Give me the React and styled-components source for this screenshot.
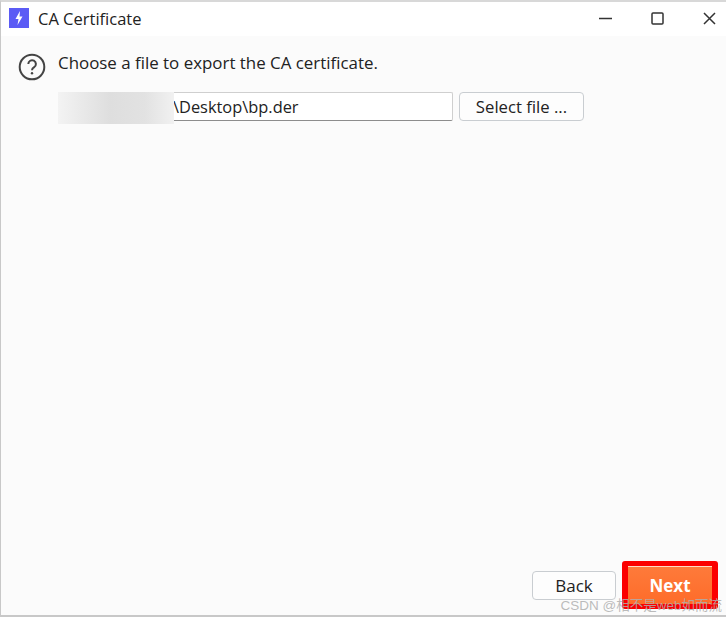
import React from 'react'
import styled, { createGlobalStyle } from 'styled-components'

const GlobalStyle = createGlobalStyle`
  html, body {
    margin: 0;
    padding: 0;
    background: #fbfbfb;
  }
`

const Window = styled.div`
  position: relative;
  box-sizing: border-box;
  display: flex;
  flex-direction: column;
  width: 726px;
  height: 617px;
  overflow: hidden;
  background: #fbfbfb;
  border-top: 2px solid #d8d8d8;
  border-left: 1px solid #c8c8c8;
  border-bottom: 2px solid #c8c8c8;
  font-family: "Open Sans", "Noto Sans", sans-serif;
  color: #222;
`

const TitleBar = styled.div`
  box-sizing: border-box;
  display: flex;
  align-items: center;
  flex: none;
  height: 34px;
  padding: 0 0 2px 8px;
  background: #fff;
`

const AppIcon = styled.svg`
  width: 20px;
  height: 20px;
  margin-right: 9px;
`

const Title = styled.span`
  flex: 1;
  font-size: 16.5px;
  color: #222;
`

const WindowControls = styled.div`
  display: flex;
  align-items: center;
  gap: 39px;
  padding-right: 10px;
`

const ControlIcon = styled.svg`
  display: block;
  width: 13px;
  height: 13px;
  fill: none;
  stroke: #333;
  stroke-width: 1.5;
`

const Content = styled.div`
  flex: 1;
  display: flex;
  flex-direction: column;
  padding: 17px 0 0 17px;
`

const PromptRow = styled.div`
  display: flex;
  align-items: flex-start;
  gap: 12px;
`

const HelpIcon = styled.svg`
  width: 28px;
  height: 28px;
  fill: none;
  stroke: #444;
`

const Prompt = styled.span`
  font-size: 16.9px;
  line-height: 20px;
  color: #222;
`

const FileRow = styled.div`
  display: flex;
  gap: 6px;
  margin: 11px 0 0 40px;
`

const PathField = styled.div`
  position: relative;
  box-sizing: border-box;
  display: flex;
  align-items: center;
  width: 395px;
  height: 29px;
  padding-left: 114px;
  background: #fff;
  border: 1px solid #cfcfcf;
  border-bottom-color: #8d8d8d;
  border-radius: 2px;
  font-size: 16.4px;
`

const BlurredPath = styled.div`
  position: absolute;
  left: -1px;
  top: -1px;
  width: 116px;
  height: 32px;
  background: linear-gradient(90deg, #f3f3f3, #dedede 45%, #e2e2e2 75%, #f1f1f1);
`

const Button = styled.button`
  box-sizing: border-box;
  height: 29px;
  padding: 0;
  background: #fdfdfd;
  border: 1px solid #c9cdd1;
  border-radius: 4px;
  font-family: inherit;
  font-size: 16.7px;
  color: #222;
`

const SelectButton = styled(Button)`
  width: 125px;
`

const Footer = styled.div`
  display: flex;
  justify-content: flex-end;
  align-items: center;
  gap: 6px;
  flex: none;
  padding: 0 8px 6px 0;
`

const BackButton = styled(Button)`
  width: 84px;
  font-size: 17px;
`

const NextOutline = styled.div`
  box-sizing: border-box;
  width: 96px;
  height: 48px;
  padding: 5px 6px;
  background: #fb0000;
  border-radius: 3px;
`

const NextButton = styled.button`
  display: block;
  width: 100%;
  height: 100%;
  padding: 0;
  background: linear-gradient(180deg, #fe7a3a, #fe6c2a);
  border: none;
  border-top: 1px solid #ffd9c4;
  font-family: inherit;
  font-size: 17px;
  font-weight: 700;
  color: #fff;
`

const Watermark = styled.span`
  position: absolute;
  right: 4px;
  bottom: 1px;
  font-family: "Liberation Sans", "Noto Sans CJK SC", sans-serif;
  font-size: 13.5px;
  color: rgba(175, 175, 175, 0.85);
`

export default function App() {
  return (
    <Window>
      <GlobalStyle />
      <TitleBar>
        <AppIcon viewBox="0 0 20 20">
          <rect width="20" height="20" fill="#5b5bf5" />
          <path d="M11 3 L6.5 11 H9.5 L8.5 17 L13.5 8.5 H10.5 Z" fill="#fff" />
        </AppIcon>
        <Title>CA Certificate</Title>
        <WindowControls>
          <ControlIcon viewBox="0 0 13 13">
            <path d="M0 6.5 H13" />
          </ControlIcon>
          <ControlIcon viewBox="0 0 13 13">
            <rect x="1" y="1" width="11" height="11" rx="1" />
          </ControlIcon>
          <ControlIcon viewBox="0 0 13 13">
            <path d="M1 1 L12 12 M12 1 L1 12" />
          </ControlIcon>
        </WindowControls>
      </TitleBar>
      <Content>
        <PromptRow>
          <HelpIcon viewBox="0 0 28 28">
            <circle cx="14" cy="14" r="12.3" strokeWidth="2" />
            <path d="M10.3 11 a3.8 3.8 0 1 1 5.9 3.2 c-1.4 .9 -2.2 1.6 -2.2 3" strokeWidth="2" />
            <circle cx="14" cy="20.3" r="1.2" fill="#444" stroke="none" />
          </HelpIcon>
          <Prompt>Choose a file to export the CA certificate.</Prompt>
        </PromptRow>
        <FileRow>
          <PathField>
            <BlurredPath />
            \Desktop\bp.der
          </PathField>
          <SelectButton>Select file ...</SelectButton>
        </FileRow>
      </Content>
      <Footer>
        <BackButton>Back</BackButton>
        <NextOutline>
          <NextButton>Next</NextButton>
        </NextOutline>
      </Footer>
      <Watermark>CSDN @相不是web如而流</Watermark>
    </Window>
  )
}
